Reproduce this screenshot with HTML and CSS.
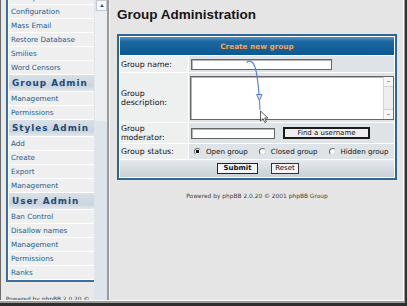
FILE: index.html
```html
<!DOCTYPE html>
<html>
<head>
<title>Group Administration</title>
<link rel="stylesheet" href="styles.css">
</head>
<body>
<div class="window">
 <div class="chrome">
  <div class="frames">

   <div class="navframe">
    <table class="nav">
     <tr><th>General Admin</th></tr>
     <tr><td><a href="#">Backup Database</a></td></tr>
     <tr><td><a href="#">Configuration</a></td></tr>
     <tr><td><a href="#">Mass Email</a></td></tr>
     <tr><td><a href="#">Restore Database</a></td></tr>
     <tr><td><a href="#">Smilies</a></td></tr>
     <tr><td><a href="#">Word Censors</a></td></tr>
     <tr><th>Group Admin</th></tr>
     <tr><td><a href="#">Management</a></td></tr>
     <tr><td><a href="#">Permissions</a></td></tr>
     <tr><th>Styles Admin</th></tr>
     <tr><td><a href="#">Add</a></td></tr>
     <tr><td><a href="#">Create</a></td></tr>
     <tr><td><a href="#">Export</a></td></tr>
     <tr><td><a href="#">Management</a></td></tr>
     <tr><th>User Admin</th></tr>
     <tr><td><a href="#">Ban Control</a></td></tr>
     <tr><td><a href="#">Disallow names</a></td></tr>
     <tr><td><a href="#">Management</a></td></tr>
     <tr><td><a href="#">Permissions</a></td></tr>
     <tr><td><a href="#">Ranks</a></td></tr>
    </table>
    <div class="navcopy">Powered by phpBB 2.0.20 &copy; 2001 phpBB Group</div>
   </div>

   <div class="vscroll">
    <div class="sbtn"><span class="uparr"></span></div>
    <div class="thumb"></div>
   </div>
   <div class="divider"></div>

   <div class="main">
    <h1>Group Administration</h1>
    <table class="forumline">
     <colgroup><col class="c-lbl"><col class="c-fld"></colgroup>
     <tr><th class="thhead" colspan="2">Create new group</th></tr>
     <tr class="r-name">
      <td class="lbl">Group name:</td>
      <td class="fld"><input type="text" class="txt name"></td>
     </tr>
     <tr class="r-desc">
      <td class="lbl">Group description:</td>
      <td class="fld">
       <div class="tarea">
        <textarea></textarea>
        <div class="tsb"><span class="tb"></span><span class="tb dn"></span></div>
       </div>
      </td>
     </tr>
     <tr class="r-mod">
      <td class="lbl">Group moderator:</td>
      <td class="fld">
       <div class="modline">
        <input type="text" class="txt mod">
        <input type="button" class="btn find" value="Find a username">
       </div>
      </td>
     </tr>
     <tr class="r-status">
      <td class="lbl">Group status:</td>
      <td class="fld">
       <div class="opts">
        <label class="opt"><span class="radio on"></span>Open group</label>
        <label class="opt"><span class="radio"></span>Closed group</label>
        <label class="opt"><span class="radio"></span>Hidden group</label>
       </div>
      </td>
     </tr>
     <tr class="r-bottom">
      <td class="catbottom" colspan="2">
       <div class="btns">
        <input type="button" class="btn submit" value="Submit">
        <input type="button" class="btn reset" value="Reset">
       </div>
      </td>
     </tr>
    </table>
    <div class="copyright">Powered by phpBB 2.0.20 &copy; 2001 phpBB Group</div>
   </div>

  </div>
 </div>

 <svg class="annot" viewBox="0 0 407 306" width="407" height="306">
  <path d="M246.5,62.5 C249,60 253,61 255,67 S258,82 259,94" fill="none" stroke="#4d7be0" stroke-width="1.1"/>
  <path d="M256.6,94.5 L262,94.5 L259.4,100.5 Z" fill="#dfe6f6" stroke="#4d7be0" stroke-width="1"/>
  <path d="M259.5,100.5 L260,110" fill="none" stroke="#4d7be0" stroke-width="1"/>
  <path d="M260.5,111 L260.5,121 L263,118.6 L264.8,122.5 L266.4,121.8 L264.7,118 L268,118 Z" fill="#fff" stroke="#333" stroke-width="0.8"/>
 </svg>
</div>
</body>
</html>
```

FILE: styles.css
```css
body {
	margin: 0;
	background: #333;
}

.window {
	position: relative;
	width: 407px;
	height: 306px;
	box-sizing: border-box;
	border-right: 2px solid #333;
	border-bottom: 3px solid #2e2e2e;
	overflow: hidden;
}
.chrome {
	height: 100%;
	box-sizing: border-box;
	border-right: 1px solid #9c9c9c;
	border-bottom: 2px solid #9c9c9c;
}
.frames {
	display: flex;
	height: 100%;
	box-sizing: border-box;
	border-right: 1px solid #fff;
	border-bottom: 1px solid #fff;
}

/* left frame */
.navframe {
	width: 94px;
	flex: none;
	box-sizing: border-box;
	border-left: 1px solid #6b6b6b;
	padding-left: 5px;
	background: #e9e9e9;
	overflow: hidden;
}
.nav {
	width: 87px;
	margin-top: -29px;
	border: 2px solid #3a6fa0;
	border-spacing: 1px;
	background: #fff;
}
.nav td {
	height: 13px;
	padding: 0 0 0 2px;
	background: #efefef;
	font: 7.2px/13px "DejaVu Sans", sans-serif;
	white-space: nowrap;
}
.nav a {color: #245a8e; text-decoration: none;}
.nav th {
	height: 16px;
	padding: 0 0 0 3px;
	text-align: left;
	background: linear-gradient(#d9e0e7, #cbd4dd 70%, #e3e8ed);
	color: #1d4a77;
	font: bold 8.8px/16px "DejaVu Sans", sans-serif;
	letter-spacing: 1px;
	white-space: nowrap;
}
.navcopy {
	margin: 13px 0 0 -5px;
	text-align: center;
	font: 5.9px/8px "DejaVu Sans", sans-serif;
	color: #444;
}

.vscroll {
	width: 13px;
	flex: none;
	background: #dde4eb;
	display: flex;
	flex-direction: column;
	align-items: flex-end;
}
.sbtn {
	width: 9px;
	height: 9px;
	border: 1px solid #c3cad3;
	background: #f6f8fa;
	display: flex;
	align-items: center;
	justify-content: center;
}
.uparr {
	border-left: 2.5px solid transparent;
	border-right: 2.5px solid transparent;
	border-bottom: 3px solid #2a5d98;
}
.thumb {
	align-self: stretch;
	height: 110px;
	background: #eceff2;
	border-left: 1px solid #e1e6eb;
}
.divider {
	width: 2px;
	flex: none;
	background: #9a9a9a;
	border-right: 1px solid #f3f3f3;
}

/* right frame */
.main {
	flex: 1;
	background: #e5e5e5;
	padding: 0 6px 0 7px;
}
h1 {
	margin: 7px 0 0;
	font: bold 13.5px/16px "Liberation Sans", Arial, sans-serif;
	color: #151515;
}
.forumline {
	margin-top: 11px;
	width: 280px;
	table-layout: fixed;
	border: 2px solid #2d6797;
	border-spacing: 1px;
	background: #fff;
}
.c-lbl {width: 68px;}
.c-fld {width: 205px;}
.forumline td {padding: 0;}
.thhead {
	height: 18px;
	padding: 0;
	background: linear-gradient(#5b93c2, #1b68a3 25%, #0c5891);
	color: #f7a54f;
	font: bold 7.3px "DejaVu Sans", sans-serif;
	text-align: center;
}
.forumline td.lbl {
	padding-left: 1px;
	background: #eeefef;
	color: #111;
	font: 7.8px/9px "DejaVu Sans", sans-serif;
}
.forumline td.fld {
	padding-left: 2px;
	background: #dee3e7;
}
.r-name td {height: 16px;}
.r-desc td {height: 49px;}
.r-mod td {height: 20px;}
.r-status td {height: 15px;}
.r-bottom td {height: 17px;}

.txt {
	display: block;
	box-sizing: border-box;
	height: 11px;
	margin: 0;
	padding: 0;
	border: 1px solid #666;
	box-shadow: inset 1px 1px 0 #b5b5b5;
	background: #fff;
}
.txt.name {width: 141px;}
.txt.mod {width: 84px;}

.tarea {
	display: flex;
	width: 204px;
	height: 44px;
	margin: 1px 0 0 -1px;
	box-sizing: border-box;
	border: 1px solid #666;
	background: #fff;
}
.tarea textarea {
	flex: 1;
	min-width: 0;
	border: 0;
	padding: 0;
	margin: 0;
	resize: none;
	background: #fff;
	box-shadow: inset 1px 1px 0 #b5b5b5;
}
.tsb {
	width: 9px;
	flex: none;
	background: #eeeeee;
	border-left: 1px solid #d4d4d4;
	display: flex;
	flex-direction: column;
	justify-content: space-between;
}
.tb {
	height: 9px;
	background: #f7f7f7;
	border-bottom: 1px solid #cfcfcf;
	position: relative;
}
.tb.dn {border-bottom: 0; border-top: 1px solid #cfcfcf;}
.tb::after {
	content: "";
	position: absolute;
	left: 3px;
	top: 4px;
	width: 3px;
	height: 1px;
	background: #9a9a9a;
}

.modline {
	display: flex;
	align-items: center;
	gap: 8px;
}

.btn {
	box-sizing: border-box;
	height: 11px;
	margin: 0;
	padding: 0;
	background: #f6f6f6;
	color: #111;
	font: 7px/9px "DejaVu Sans", sans-serif;
	border-radius: 0;
	appearance: none;
}
.btn.find {width: 87px; height: 12px; border: 2px solid #1c1c1c; background: #efefef;}
.btn.submit {width: 41px; border: 1px solid #222; font-weight: bold;}
.btn.reset {width: 28px; border: 1px solid #333;}

.opts {
	display: flex;
	align-items: center;
	gap: 11px;
	padding-left: 3px;
	font: 7.1px/9px "DejaVu Sans", sans-serif;
	color: #111;
	white-space: nowrap;
}
.opt {
	display: flex;
	align-items: center;
	gap: 5px;
}
.radio {
	width: 7px;
	height: 7px;
	flex: none;
	box-sizing: border-box;
	border-radius: 50%;
	border: 1px solid;
	border-color: #6a6a6a #d8d8d8 #d8d8d8 #6a6a6a;
	background: #fff;
}
.radio.on {background: radial-gradient(circle, #111 0 1.4px, #fff 1.9px);}

.catbottom {
	background: linear-gradient(#e6eaee, #d2d9df 60%, #c9d1d8);
}
.btns {
	display: flex;
	justify-content: center;
	gap: 13px;
	padding-left: 2px;
}

.copyright {
	margin-top: 12px;
	text-align: center;
	font: 5.9px/8px "DejaVu Sans", sans-serif;
	color: #444;
}

.annot {
	position: absolute;
	left: 0;
	top: 0;
	pointer-events: none;
}
```
